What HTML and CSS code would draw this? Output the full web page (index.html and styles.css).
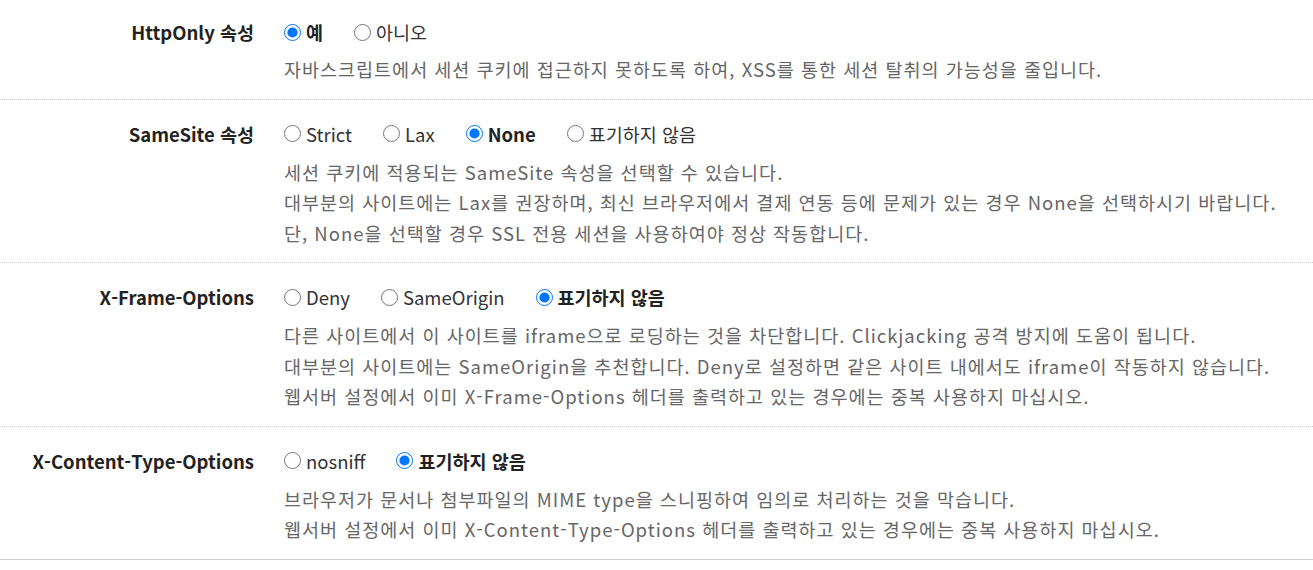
FILE: index.html
```html
<!DOCTYPE html>
<html lang="ko">
<head>
    <meta charset="UTF-8">
    <title>보안 설정</title>
    <link rel="stylesheet" href="styles.css">
</head>
<body>
    <div class="settings">
        <div class="row first">
            <div class="label">HttpOnly 속성</div>
            <div class="field">
                <div class="options">
                    <label class="option checked"><input type="radio" name="httponly" checked> 예</label>
                    <label class="option"><input type="radio" name="httponly"> 아니오</label>
                </div>
                <p class="desc">자바스크립트에서 세션 쿠키에 접근하지 못하도록 하여, XSS를 통한 세션 탈취의 가능성을 줄입니다.</p>
            </div>
        </div>

        <div class="row">
            <div class="label">SameSite 속성</div>
            <div class="field">
                <div class="options">
                    <label class="option"><input type="radio" name="samesite"> Strict</label>
                    <label class="option"><input type="radio" name="samesite"> Lax</label>
                    <label class="option checked"><input type="radio" name="samesite" checked> None</label>
                    <label class="option"><input type="radio" name="samesite"> 표기하지 않음</label>
                </div>
                <p class="desc">세션 쿠키에 적용되는 SameSite 속성을 선택할 수 있습니다.<br>
                대부분의 사이트에는 Lax를 권장하며, 최신 브라우저에서 결제 연동 등에 문제가 있는 경우 None을 선택하시기 바랍니다.<br>
                단, None을 선택할 경우 SSL 전용 세션을 사용하여야 정상 작동합니다.</p>
            </div>
        </div>

        <div class="row">
            <div class="label">X-Frame-Options</div>
            <div class="field">
                <div class="options">
                    <label class="option"><input type="radio" name="xframe"> Deny</label>
                    <label class="option"><input type="radio" name="xframe"> SameOrigin</label>
                    <label class="option checked"><input type="radio" name="xframe" checked> 표기하지 않음</label>
                </div>
                <p class="desc">다른 사이트에서 이 사이트를 iframe으로 로딩하는 것을 차단합니다. Clickjacking 공격 방지에 도움이 됩니다.<br>
                대부분의 사이트에는 SameOrigin을 추천합니다. Deny로 설정하면 같은 사이트 내에서도 iframe이 작동하지 않습니다.<br>
                웹서버 설정에서 이미 X-Frame-Options 헤더를 출력하고 있는 경우에는 중복 사용하지 마십시오.</p>
            </div>
        </div>

        <div class="row last">
            <div class="label">X-Content-Type-Options</div>
            <div class="field">
                <div class="options">
                    <label class="option"><input type="radio" name="xcontent"> nosniff</label>
                    <label class="option checked"><input type="radio" name="xcontent" checked> 표기하지 않음</label>
                </div>
                <p class="desc">브라우저가 문서나 첨부파일의 MIME type을 스니핑하여 임의로 처리하는 것을 막습니다.<br>
                웹서버 설정에서 이미 X-Content-Type-Options 헤더를 출력하고 있는 경우에는 중복 사용하지 마십시오.</p>
            </div>
        </div>
    </div>
</body>
</html>
```

FILE: styles.css
```css
body {
    margin: 0;
    background: #fff;
    font-family: "Noto Sans CJK KR", "Noto Sans", sans-serif;
    font-size: 18.5px;
    color: #333;
}
.settings {
    border-bottom: 1px solid #ccc;
}
.row {
    display: grid;
    grid-template-columns: 254px 1fr;
    column-gap: 30px;
    padding: 18px 0 14px;
    border-bottom: 1px dotted #ccc;
}
.row.first {
    padding-top: 16px;
}
.row.first .desc {
    margin-top: 6px;
}
.row.last {
    border-bottom: none;
}
.label {
    text-align: right;
    font-weight: bold;
    color: #222;
    line-height: 32px;
}
.options {
    display: flex;
    gap: 31px;
    line-height: 32px;
}
.option {
    display: flex;
    align-items: center;
    gap: 5px;
    color: #333;
}
.option.checked {
    font-weight: bold;
    color: #222;
}
.option input {
    width: 17px;
    height: 17px;
    margin: 0;
    accent-color: #0075ff;
}
.desc {
    margin: 7px 0 0;
    color: #666;
    line-height: 30.5px;
    letter-spacing: 1px;
}
```
